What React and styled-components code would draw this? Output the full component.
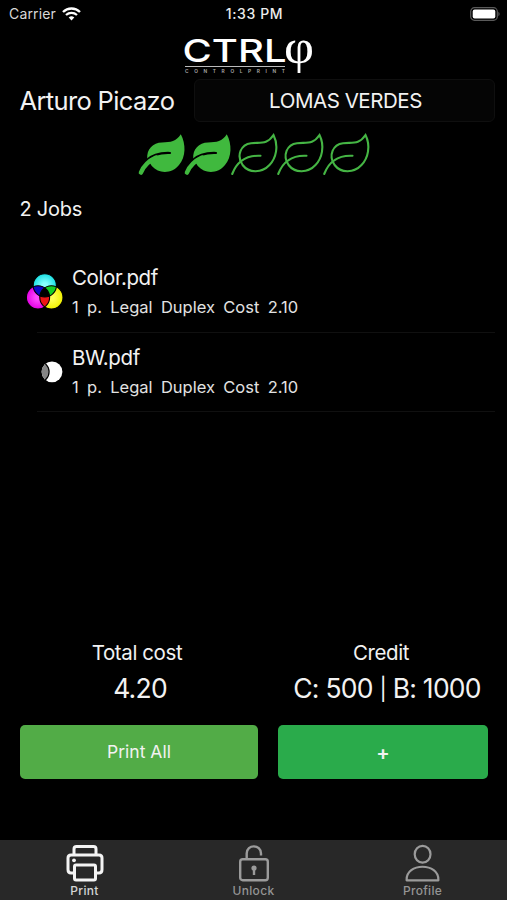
import React, { useState } from "react";
import styled, { createGlobalStyle } from "styled-components";

const GlobalStyle = createGlobalStyle`
  * {
    box-sizing: border-box;
  }

  body {
    margin: 0;
    background-color: #000;
    color: #f2f2f2;
    font-family: Inter, "Liberation Sans", sans-serif;
  }

  button {
    padding: 0;
    border: 0;
    color: inherit;
    font-family: inherit;
    cursor: pointer;
  }

  svg {
    display: block;
    flex: none;
  }
`;

const Screen = styled.div`
  display: flex;
  flex-direction: column;
  width: 507px;
  height: 900px;
  overflow: hidden;
  background-color: #000;
`;

const StatusBar = styled.div`
  display: grid;
  grid-template-columns: 1fr auto 1fr;
  align-items: center;
  height: 28px;
  padding: 0 7px 0 9px;
  font-size: 14px;
  line-height: 28px;
`;

const Carrier = styled.div`
  display: flex;
  align-items: center;
  gap: 6px;
  color: #d8d8d8;
  letter-spacing: 0.15px;
`;

const Clock = styled.span`
  font-size: 14px;
  font-weight: 500;
  letter-spacing: 0.6px;
  color: #ececec;
`;

const Battery = styled.div`
  justify-self: end;
`;

const LogoRow = styled.div`
  display: flex;
  justify-content: center;
  height: 50px;
  padding: 8px 10px 0 0;
`;

const UserRow = styled.div`
  display: flex;
  align-items: center;
  justify-content: space-between;
  height: 44px;
  padding: 0 12px 0 19.5px;
`;

const UserName = styled.span`
  font-size: 25.5px;
  letter-spacing: -0.65px;
  white-space: nowrap;
`;

const BranchButton = styled.button`
  width: 301px;
  height: 43px;
  border: 1px solid #0f0f0f;
  border-radius: 6px;
  padding-left: 2px;
  background-color: #050505;
  font-size: 20.5px;
  letter-spacing: -0.45px;
`;

const Rating = styled.div`
  display: flex;
  height: 68px;
  padding: 10px 0 0 138px;
`;

const JobCount = styled.div`
  height: 63px;
  padding: 6px 19.5px;
  font-size: 20px;
  line-height: 26px;
  letter-spacing: -0.25px;
`;

const JobList = styled.ul`
  flex: 1;
  margin: 0;
  padding: 0 12px 0 25px;
  list-style: none;
`;

const JobItem = styled.li`
  display: flex;
  height: 79.5px;
`;

const JobIcon = styled.div`
  width: 12px;
  padding-top: 19px;

  svg {
    overflow: visible;
  }
`;

const JobInfo = styled.div`
  flex: 1;
  border-bottom: 1px solid #101010;
  padding: 11.3px 0 0 35px;
`;

const JobName = styled.div`
  font-size: 20.5px;
  line-height: 27px;
  letter-spacing: -0.4px;
`;

const JobDetail = styled.div`
  margin-top: 5px;
  font-size: 16.5px;
  line-height: 22px;
  word-spacing: 3.7px;
  color: #e2e2e2;
`;

const Summary = styled.div`
  display: grid;
  grid-template-columns: 240px 1fr;
  height: 86px;
  padding: 0 0 0 20px;
  text-align: center;
`;

const SummaryLabel = styled.div`
  padding-right: ${({ $shift }) => $shift}px;
  font-size: 20.5px;
  line-height: 28px;
  letter-spacing: -0.4px;
`;

const SummaryValue = styled.div`
  margin-top: 4px;
  padding-left: ${({ $shift }) => $shift}px;
  font-size: 26.5px;
  line-height: 34px;
  letter-spacing: -0.75px;
  white-space: nowrap;
`;

const Pipe = styled.span`
  font-size: 22px;
  vertical-align: 1px;
`;

const Actions = styled.div`
  display: grid;
  grid-template-columns: 238px 210px;
  gap: 20px;
  height: 115px;
  padding-left: 20px;
`;

const ActionButton = styled.button`
  height: 54px;
  border-radius: 5px;
  padding-${({ $nudge }) => $nudge}: 2px;
  background-color: ${({ $color }) => $color};
  font-size: ${({ $size }) => $size}px;
  font-weight: ${({ $weight }) => $weight};
`;

const TabBar = styled.nav`
  display: grid;
  grid-template-columns: repeat(3, 1fr);
  height: 60px;
  background-color: #282828;
`;

const Tab = styled.button`
  display: flex;
  flex-direction: column;
  align-items: center;
  padding-top: 4px;
  background: none;
  color: ${({ $active }) => ($active ? "#f4f4f4" : "#9b9b9b")};

  span {
    margin-top: 2px;
    font-size: 12px;
    font-weight: 500;
    line-height: 14px;
    letter-spacing: 0.3px;
    color: ${({ $active }) => ($active ? "#d4d4d4" : "#949494")};
  }
`;

const Wifi = () => (
  <svg width="19" height="14" viewBox="0 0 19 14" fill="none">
    <path d="M1 5C5.8 0.4 13.2 0.4 18 5" stroke="#fff" strokeWidth="2.4" />
    <path d="M4 8C7.2 5.1 11.8 5.1 15 8" stroke="#fff" strokeWidth="2.3" />
    <path d="M6.7 10.5Q9.5 8.2 12.3 10.5L9.5 13.4Z" fill="#fff" />
  </svg>
);

const BatteryIcon = () => (
  <svg width="30" height="14" viewBox="0 0 30 14">
    <rect x="0.7" y="0.7" width="26.6" height="12.6" rx="3.8" fill="none" stroke="#5a5a5a" strokeWidth="1.2" />
    <rect x="2.7" y="2.5" width="22.6" height="9" rx="2" fill="#fff" />
    <path d="M28.4 4.8C30 5.5 30 8.5 28.4 9.2Z" fill="#5a5a5a" />
  </svg>
);

const Logo = () => (
  <svg width="132" height="40" viewBox="0 0 132 40" fill="#fff" overflow="visible">
    <text x="-0.5" y="26.2" fontFamily="Inter" fontSize="31.5" fontWeight="500" textLength="104" lengthAdjust="spacingAndGlyphs">
      CTRL
    </text>
    <rect x="2" y="30" width="100" height="1" fill="#bbb" />
    <text x="2" y="37" fontFamily="Inter" fontSize="4.8" fontWeight="600" textLength="100" fill="#aaa">
      CONTROLPRINT
    </text>
    <text x="101" y="26.6" fontFamily="Liberation Serif" fontSize="48" textLength="30" lengthAdjust="spacingAndGlyphs">
      φ
    </text>
  </svg>
);

const Leaf = ({ filled }) => (
  <svg width="46" height="44" viewBox="0 0 46 44" fill="none" overflow="visible" strokeLinecap="round">
    {filled ? (
      <>
        <path
          d="M9.3 27C8.3 17 15 10.6 24 10.4C33 10.2 38 9.5 42.8 2.2C48 12 48 25 41 33C34.5 41.5 21 42.5 13.8 34L9.3 27Z"
          fill="#40b93e"
        />
        <path d="M8.5 28.3C14 23 21 20.6 32 21" stroke="#000" strokeWidth="2.2" />
        <path d="M2.9 40.6C5.5 34.5 10 29.3 18 25.6" stroke="#40b93e" strokeWidth="4.4" />
      </>
    ) : (
      <g stroke="#45b544" strokeWidth="2.1">
        <path d="M43.5 3C49 14 46 26.5 39.5 33C32 41 19 41.5 12.6 33C6 23.5 11 12.3 21 11.2C31 10.2 37 12.8 43.5 3Z" />
        <path d="M2.2 42C7 29.5 16 23 30.5 23.8" />
      </g>
    )}
  </svg>
);

const ColorIcon = () => (
  <svg width="40" height="40" viewBox="0 0 40 40">
    <defs>
      <clipPath id="cyan">
        <circle cx="19.8" cy="13.4" r="11.6" />
      </clipPath>
      <clipPath id="magenta">
        <circle cx="13" cy="25.4" r="11.6" />
      </clipPath>
      <radialGradient id="cyanFill">
        <stop offset="0.2" stopColor="#8ff" />
        <stop offset="1" stopColor="#18dfe3" />
      </radialGradient>
      <radialGradient id="magentaFill">
        <stop offset="0.2" stopColor="#ff48ff" />
        <stop offset="1" stopColor="#e400e4" />
      </radialGradient>
      <radialGradient id="yellowFill">
        <stop offset="0.2" stopColor="#ffff55" />
        <stop offset="1" stopColor="#f0f000" />
      </radialGradient>
    </defs>
    <circle cx="19.8" cy="13.4" r="11.6" fill="url(#cyanFill)" />
    <circle cx="13" cy="25.4" r="11.6" fill="url(#magentaFill)" />
    <circle cx="26.4" cy="25.4" r="11.6" fill="url(#yellowFill)" />
    <circle cx="13" cy="25.4" r="11.6" fill="#0c05c8" clipPath="url(#cyan)" />
    <circle cx="26.4" cy="25.4" r="11.6" fill="#14cf26" clipPath="url(#cyan)" />
    <circle cx="26.4" cy="25.4" r="11.6" fill="#ee1515" clipPath="url(#magenta)" />
    <g clipPath="url(#cyan)">
      <g clipPath="url(#magenta)">
        <circle cx="26.4" cy="25.4" r="11.6" />
      </g>
    </g>
    <g fill="none" stroke="#000" strokeWidth="1.1">
      <circle cx="19.8" cy="13.4" r="11.6" />
      <circle cx="13" cy="25.4" r="11.6" />
      <circle cx="26.4" cy="25.4" r="11.6" />
    </g>
  </svg>
);

const MonoIcon = () => (
  <svg width="40" height="40" viewBox="0 0 40 40">
    <defs>
      <clipPath id="mono">
        <circle cx="27" cy="19.8" r="10.4" />
      </clipPath>
    </defs>
    <circle cx="27" cy="19.8" r="10.4" fill="#fff" />
    <circle cx="13.5" cy="19.8" r="10.6" fill="#858585" stroke="#000" strokeWidth="1.2" clipPath="url(#mono)" />
  </svg>
);

const PrinterIcon = () => (
  <svg width="38" height="38" viewBox="0 0 38 38" fill="none" stroke="currentColor" strokeWidth="3" strokeLinejoin="round">
    <path d="M8 11V5Q8 2.5 10.5 2.5H27.5Q30 2.5 30 5V11" />
    <path d="M8.5 29H5Q2 29 2 25.5V14Q2 11 5 11H33Q36 11 36 14V25.5Q36 29 33 29H29.5" />
    <rect x="8.5" y="21" width="21" height="15" rx="1.5" />
    <circle cx="8" cy="16.3" r="1.9" fill="currentColor" stroke="none" />
  </svg>
);

const LockIcon = () => (
  <svg width="38" height="38" viewBox="0 0 38 38" fill="none" stroke="currentColor" strokeWidth="2.4">
    <rect x="5.2" y="15.2" width="27.6" height="21" rx="2.5" />
    <path d="M11.7 15V9.5C11.7 0 26 0 26 9.5V11.5" />
    <circle cx="19" cy="24" r="2.6" fill="currentColor" stroke="none" />
    <path d="M19 25V31" />
  </svg>
);

const ProfileIcon = () => (
  <svg width="38" height="38" viewBox="0 0 38 38" fill="none" stroke="currentColor" strokeWidth="2.2" strokeLinejoin="round">
    <ellipse cx="18.6" cy="10.2" rx="7.9" ry="8.4" />
    <path d="M2.6 36.3C1.6 18.2 35.4 18.2 34.4 36.3Z" />
  </svg>
);

const jobs = [
  { id: 1, name: "Color.pdf", detail: "1 p. Legal Duplex Cost 2.10", icon: <ColorIcon /> },
  { id: 2, name: "BW.pdf", detail: "1 p. Legal Duplex Cost 2.10", icon: <MonoIcon /> },
];

const tabs = [
  { id: "print", label: "Print", icon: <PrinterIcon /> },
  { id: "unlock", label: "Unlock", icon: <LockIcon /> },
  { id: "profile", label: "Profile", icon: <ProfileIcon /> },
];

const App = () => {
  const [tab, setTab] = useState("print");

  return (
    <Screen>
      <GlobalStyle />
      <StatusBar>
        <Carrier>
          Carrier
          <Wifi />
        </Carrier>
        <Clock>1:33 PM</Clock>
        <Battery>
          <BatteryIcon />
        </Battery>
      </StatusBar>
      <LogoRow>
        <Logo />
      </LogoRow>
      <UserRow>
        <UserName>Arturo Picazo</UserName>
        <BranchButton>LOMAS VERDES</BranchButton>
      </UserRow>
      <Rating>
        {[1, 2, 3, 4, 5].map((n) => (
          <Leaf key={n} filled={n <= 2} />
        ))}
      </Rating>
      <JobCount>{jobs.length} Jobs</JobCount>
      <JobList>
        {jobs.map((job) => (
          <JobItem key={job.id}>
            <JobIcon>{job.icon}</JobIcon>
            <JobInfo>
              <JobName>{job.name}</JobName>
              <JobDetail>{job.detail}</JobDetail>
            </JobInfo>
          </JobItem>
        ))}
      </JobList>
      <Summary>
        <div>
          <SummaryLabel $shift={6}>Total cost</SummaryLabel>
          <SummaryValue $shift={0}>4.20</SummaryValue>
        </div>
        <div>
          <SummaryLabel $shift={5}>Credit</SummaryLabel>
          <SummaryValue $shift={7}>
            C: 500 <Pipe>|</Pipe> B: 1000
          </SummaryValue>
        </div>
      </Summary>
      <Actions>
        <ActionButton $color="#52ac47" $size={17.5} $weight={400} $nudge="bottom">
          Print All
        </ActionButton>
        <ActionButton $color="#2aab4b" $size={20} $weight={600} $nudge="top">
          +
        </ActionButton>
      </Actions>
      <TabBar>
        {tabs.map(({ id, label, icon }) => (
          <Tab key={id} $active={tab === id} onClick={() => setTab(id)}>
            {icon}
            <span>{label}</span>
          </Tab>
        ))}
      </TabBar>
    </Screen>
  );
};

export default App;
